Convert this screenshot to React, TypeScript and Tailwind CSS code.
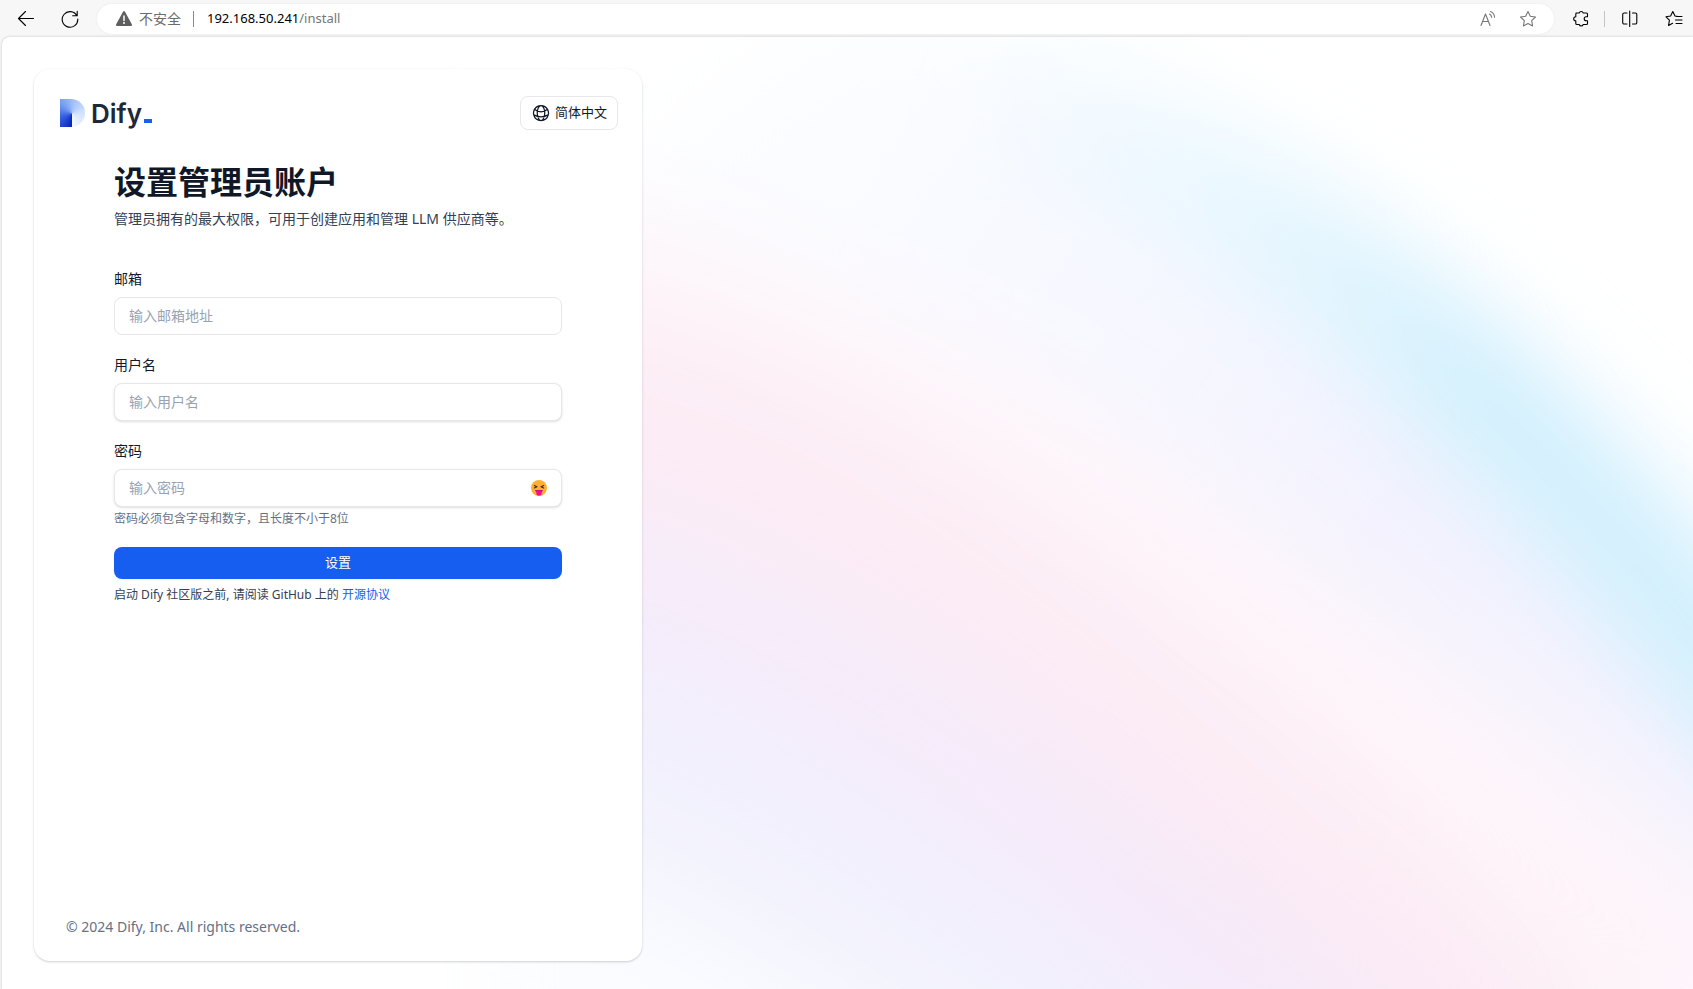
import { useState } from "react";
import { HiOutlineGlobeAlt } from "react-icons/hi2";

const FIELDS = [
  { id: "email", type: "email", label: "邮箱", placeholder: "输入邮箱地址", shadow: "" },
  { id: "name", type: "text", label: "用户名", placeholder: "输入用户名", shadow: "shadow-sm" },
  { id: "password", type: "password", label: "密码", placeholder: "输入密码", shadow: "shadow-sm" },
];

function Svg({ size = 18, viewBox = "0 0 18 18", className = "", children }) {
  return (
    <svg
      width={size}
      height={size}
      viewBox={viewBox}
      className={className}
      fill="none"
      stroke="currentColor"
      strokeWidth="1.1"
      strokeLinecap="round"
      strokeLinejoin="round"
      aria-hidden="true"
    >
      {children}
    </svg>
  );
}

function BrowserBar() {
  return (
    <header className="flex h-[37px] shrink-0 items-center pl-[17px] pt-1 pb-[3px] pr-2.5 text-black">
      <button aria-label="返回" className="mr-[26px]">
        <Svg>
          <path d="M16.500 8.500H1.500M8.500 1.500l-7 7 7 7" />
        </Svg>
      </button>
      <button aria-label="刷新" className="mr-[18px]">
        <Svg>
          <path d="M15.800 5.600A7.800 7.800 0 1 0 16.800 9M16.200 1.200v4.500H11.700" />
        </Svg>
      </button>

      <div className="flex h-[30px] min-w-0 flex-1 items-center rounded-full bg-white pl-[18px] pr-[17px] shadow-[0_0_3px_rgba(0,0,0,0.06)]">
        <svg width="18" height="18" viewBox="0 0 18 18" aria-hidden="true">
          <path
            d="M8 1.700a1.200 1.200 0 0 1 2 0l6.800 12.600a1.200 1.200 0 0 1-1 1.800H2.200a1.200 1.200 0 0 1-1-1.800z"
            fill="#5f5f5f"
          />
          <path d="M9 6v4.500" stroke="#fff" strokeWidth="1.500" strokeLinecap="round" />
          <circle cx="9" cy="13" r="1" fill="#fff" />
        </svg>
        <span className="ml-1.5 text-sm text-[#6b6b6b]">不安全</span>
        <span className="ml-3 h-4 w-px bg-[#8a8a8a]" />
        <div role="textbox" aria-label="地址" className="ml-[13px] min-w-0 flex-1 truncate text-[13px]">
          192.168.50.241<span className="text-[#767676]">/install</span>
        </div>
        <button aria-label="朗读此页内容" className="mr-[22px] text-[#767676]">
          <Svg>
            <path d="M2 15.500L6.500 4l4.500 11.500M3.600 11.500h5.800M10.500 4c1.300.7 2 1.800 2.200 3.400M11.500 1.500c2.500 1 3.900 3 4.100 5.800" />
          </Svg>
        </button>
        <button aria-label="收藏" className="text-[#767676]">
          <Svg>
            <path d="M9 1.500l2.300 4.800 5.200.7-3.800 3.700.9 5.300L9 13.500 4.400 16l.9-5.300L1.500 7l5.200-.7z" />
          </Svg>
        </button>
      </div>

      <button aria-label="扩展" className="ml-[18px]">
        <Svg>
          <path d="M4 3h3.200a2.100 2.100 0 0 1 4 0h3.300a1 1 0 0 1 1 1v2.800h-1.300a2 2 0 0 0 0 4h1.300v2.700a1 1 0 0 1-1 1h-3.300a2.100 2.100 0 0 1-4 0H4.800a1 1 0 0 1-1-1v-2.600a2.100 2.100 0 0 1 0-4.200V4a1 1 0 0 1 1-1z" />
        </Svg>
      </button>
      <span className="ml-3.5 mr-4 h-4 w-px bg-[#c4c4c4]" />
      <button aria-label="分屏">
        <Svg>
          <path d="M6 3H3.200A1.500 1.500 0 0 0 1.700 4.500v8A1.500 1.500 0 0 0 3.200 14H6M11.500 3h2.800a1.500 1.500 0 0 1 1.500 1.500v8a1.500 1.500 0 0 1-1.500 1.500h-2.800M8.700 1v15.500" />
        </Svg>
      </button>
      <button aria-label="收藏夹" className="ml-[26px]">
        <Svg>
          <path d="M12.200 6.300l-2.200-.3L7.800 1.500 5.600 6 1 6.800l3.400 3.400-.8 5.300 4-2.200M11 6.500h6M10.500 10H17M11 13.500h6" />
        </Svg>
      </button>
    </header>
  );
}

// Soft diagonal colour bands behind the card
function Backdrop() {
  return (
    <svg
      className="absolute inset-0 h-full w-full"
      viewBox="0 0 1691 952"
      preserveAspectRatio="none"
      fill="none"
      aria-hidden="true"
    >
      <defs>
        <filter id="soft" filterUnits="userSpaceOnUse" x="-300" y="-300" width="2500" height="1900">
          <feGaussianBlur stdDeviation="42" />
        </filter>
        <filter id="softer" filterUnits="userSpaceOnUse" x="-300" y="-300" width="2500" height="1900">
          <feGaussianBlur stdDeviation="60" />
        </filter>
        <linearGradient id="sky" gradientUnits="userSpaceOnUse" x1="1000" y1="20" x2="1480" y2="330">
          <stop offset="0" stopColor="#e2f7fe" stopOpacity="0.15" />
          <stop offset="1" stopColor="#d2f0fd" />
        </linearGradient>
        <linearGradient id="lavender" gradientUnits="userSpaceOnUse" x1="900" y1="150" x2="1350" y2="500">
          <stop offset="0" stopColor="#f5f5fe" stopOpacity="0.2" />
          <stop offset="1" stopColor="#f2f2fe" />
        </linearGradient>
      </defs>
      <path
        d="M850 -20C1150 -20 1450 200 1800 600V1100H500V250Z"
        fill="#fafcff"
        filter="url(#softer)"
      />
      <g filter="url(#soft)">
        <path d="M900 120C1150 270 1400 500 1800 860" stroke="url(#lavender)" strokeWidth="260" />
      </g>
      <g filter="url(#soft)">
        <path d="M1000 60C1310 160 1550 400 1810 740" stroke="url(#sky)" strokeWidth="130" />
      </g>
      <g filter="url(#softer)">
        <path d="M480 230C850 330 1150 460 1800 1010" stroke="#fef5fa" strokeWidth="170" />
        <path d="M500 650C760 750 900 850 1200 1060" stroke="#f2f1fd" strokeWidth="240" />
        <path d="M500 370C850 430 1050 620 1560 1080" stroke="#fcebf4" strokeWidth="210" />
      </g>
      <g filter="url(#softer)">
        <path d="M500 510C850 610 1000 760 1400 1060" stroke="#f5e7f9" strokeWidth="130" strokeOpacity="0.85" />
      </g>
    </svg>
  );
}

function Logo() {
  return (
    <div className="flex h-8 items-center">
      <div className="h-7 w-[25px] rounded-r-[14px] bg-[conic-gradient(from_180deg_at_48%_52%,#0522c2,#3d68e3_22%,#6d97f0_35%,#a3c1fa_52%,#cfdffe_72%,#f4f8ff)]" />
      <span className="ml-1.5 font-[Inter] text-[26px] font-semibold text-[#1d2939]">Dify</span>
      <span className="mt-4 ml-0.5 h-1 w-2 bg-[#155eef]" />
    </div>
  );
}

function PasswordEmoji() {
  return (
    <svg width="16" height="16" viewBox="0 0 16 16" aria-hidden="true">
      <circle cx="8" cy="8" r="8" fill="#ffb02e" />
      <path
        d="M3.300 5.500L6 6.700 3.300 8M12.700 5.500L10 6.700 12.700 8"
        fill="none"
        stroke="#402a32"
        strokeWidth="1.100"
        strokeLinecap="round"
        strokeLinejoin="round"
      />
      <path d="M4 10h8c-.2 1.600-1.600 2.600-4 2.600S4.200 11.600 4 10z" fill="#bb1d80" />
      <path d="M5.300 11h5.400v2a2.700 2.700 0 0 1-5.400 0z" fill="#ff0a95" />
    </svg>
  );
}

export default function App() {
  const [values, setValues] = useState({ email: "", name: "", password: "" });
  const [showPassword, setShowPassword] = useState(false);

  return (
    <div className="flex min-h-screen flex-col bg-[#f7f7f7] font-['Noto_Sans','Noto_Sans_CJK_SC',sans-serif]">
      <BrowserBar />
      <div className="relative ml-0.5 flex flex-1 overflow-hidden rounded-tl-lg bg-white px-8 pt-8 pb-7 shadow-[0_0_3px_rgba(0,0,0,0.2)]">
        <Backdrop />
        <main className="relative flex w-full flex-col rounded-2xl bg-white shadow-[0_1px_2px_rgba(16,24,40,0.1),0_1px_3px_rgba(16,24,40,0.1)] md:w-[608px]">
          <div className="flex items-center justify-between px-6 pt-[27px]">
            <div className="pl-0.5">
              <Logo />
            </div>
            <button className="flex h-[34px] items-center gap-1 rounded-lg border border-gray-200 px-2.5 text-[13px] text-[#101828]">
              <HiOutlineGlobeAlt className="size-5" aria-hidden="true" />
              简体中文
            </button>
          </div>

          <div className="mx-auto w-full max-w-md flex-1 pt-8">
            <h1 className="text-[32px] leading-10 font-bold text-[#101828]">设置管理员账户</h1>
            <p className="mt-[7px] text-sm text-[#344054]">
              管理员拥有的最大权限，可用于创建应用和管理 LLM 供应商等。
            </p>

            <form className="mt-10" onSubmit={(e) => e.preventDefault()}>
              {FIELDS.map((field) => (
                <div key={field.id} className="mb-5">
                  <label htmlFor={field.id} className="block h-7 text-sm leading-5 text-[#101828]">
                    {field.label}
                  </label>
                  <div className="relative">
                    <input
                      id={field.id}
                      type={field.id === "password" && showPassword ? "text" : field.type}
                      placeholder={field.placeholder}
                      value={values[field.id]}
                      onChange={(e) => setValues({ ...values, [field.id]: e.target.value })}
                      className={`block h-[38px] w-full rounded-lg border border-gray-200 bg-white px-3.5 pb-0.5 text-sm text-[#101828] placeholder:text-[#98a2b3] ${field.shadow}`}
                    />
                    {field.id === "password" && (
                      <button
                        type="button"
                        aria-label="显示密码"
                        onClick={() => setShowPassword(!showPassword)}
                        className="absolute inset-y-0 right-[15px] flex items-center"
                      >
                        <PasswordEmoji />
                      </button>
                    )}
                  </div>
                  {field.id === "password" && (
                    <p className="mt-1 text-xs text-[#667085]">密码必须包含字母和数字，且长度不小于8位</p>
                  )}
                </div>
              ))}
              <button
                type="submit"
                className="h-8 w-full rounded-lg bg-[#155eef] text-[13px] text-white shadow-xs"
              >
                设置
              </button>
            </form>
            <p className="mt-2 text-xs text-[#344054]">
              启动 Dify 社区版之前, 请阅读 GitHub 上的{" "}
              <a href="#license" className="text-[#155eef]">开源协议</a>
            </p>
          </div>

          <footer className="px-8 py-6 text-sm text-[#667085]">
            © 2024 Dify, Inc. All rights reserved.
          </footer>
        </main>
      </div>
    </div>
  );
}
